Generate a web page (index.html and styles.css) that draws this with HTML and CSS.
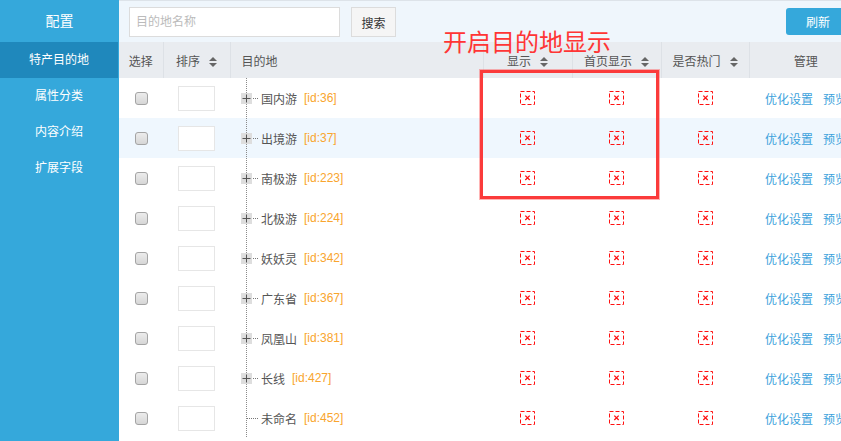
FILE: index.html
```html
<!DOCTYPE html>
<html lang="zh-CN">
<head>
<meta charset="utf-8">
<title>配置 - 特产目的地</title>
<link rel="stylesheet" href="styles.css">
</head>
<body>
<div class="app">
  <aside class="sidebar">
    <div class="side-title">配置</div>
    <nav class="menu">
      <a class="menu-item active">特产目的地</a>
      <a class="menu-item">属性分类</a>
      <a class="menu-item">内容介绍</a>
      <a class="menu-item">扩展字段</a>
    </nav>
  </aside>
  <main class="main">
    <div class="toolbar">
      <input class="search-input" type="text" placeholder="目的地名称">
      <button class="btn-search">搜索</button>
      <button class="btn-refresh">刷新</button>
    </div>
    <table class="grid">
      <colgroup>
        <col class="c-sel"><col class="c-ord"><col class="c-dest"><col class="c-show"><col class="c-home"><col class="c-hot"><col class="c-man">
      </colgroup>
      <thead>
        <tr>
          <th>选择</th>
          <th>排序<svg class="sort" width="8" height="10" viewBox="0 0 8 10"><path d="M0 4L4 0L8 4ZM0 6L4 10L8 6Z"/></svg></th>
          <th class="th-left">目的地</th>
          <th>显示<svg class="sort" width="8" height="10" viewBox="0 0 8 10"><path d="M0 4L4 0L8 4ZM0 6L4 10L8 6Z"/></svg></th>
          <th>首页显示<svg class="sort" width="8" height="10" viewBox="0 0 8 10"><path d="M0 4L4 0L8 4ZM0 6L4 10L8 6Z"/></svg></th>
          <th>是否热门<svg class="sort" width="8" height="10" viewBox="0 0 8 10"><path d="M0 4L4 0L8 4ZM0 6L4 10L8 6Z"/></svg></th>
          <th>管理</th>
        </tr>
      </thead>
      <tbody id="rows"></tbody>
    </table>
  </main>
  <div class="note">开启目的地显示</div>
  <div class="highlight"></div>
</div>
<script src="app.js"></script>
</body>
</html>
```

FILE: app.js
```js
var data = [
  ["国内游", 36, true], ["出境游", 37, true], ["南极游", 223, true],
  ["北极游", 224, true], ["妖妖灵", 342, true], ["广东省", 367, true],
  ["凤凰山", 381, true], ["长线", 427, true], ["未命名", 452, false]
];
var xicon = '<svg class="xicon" width="15" height="14" viewBox="0 0 15 14"><rect x="0.5" y="0.5" width="14" height="13" fill="none" stroke="#ff1010" stroke-dasharray="4 2"/><path d="M5.3 4.6L9.7 9M9.7 4.6L5.3 9" stroke="#ff1010" stroke-width="1.3"/></svg>';
var plus = '<span class="plus"><svg width="11" height="11" viewBox="0 0 11 11"><path d="M1.5 5.5h8M5.5 1.5v8" stroke="#555" stroke-width="1"/></svg></span><span class="hline"></span>';
var html = "";
data.forEach(function (d, i) {
  html += '<tr class="' + (i === 1 ? "hover" : "") + '">' +
    '<td class="center"><span class="check"></span></td>' +
    '<td class="center"><input class="order" type="text"></td>' +
    '<td class="dest"><div class="node">' +
      (d[2] ? plus : '<span class="hline long"></span>') +
      '<span class="name">' + d[0] + '</span><span class="id">[id:' + d[1] + ']</span></div></td>' +
    '<td class="center">' + xicon + '</td>' +
    '<td class="center">' + xicon + '</td>' +
    '<td class="center">' + xicon + '</td>' +
    '<td class="manage"><a>优化设置</a><a>预览</a></td>' +
    '</tr>';
});
document.getElementById("rows").innerHTML = html;
```

FILE: styles.css
```css
* { box-sizing: border-box; }
html, body { margin: 0; padding: 0; overflow: hidden; }
body {
  font-family: "Liberation Sans", "Noto Sans CJK SC", sans-serif;
  font-size: 12px;
  color: #555;
  background: #fff;
}
.app {
  position: relative;
  display: flex;
  width: 862px;
  height: 441px;
}
.sidebar {
  width: 119px;
  flex-shrink: 0;
  background: #35a8db;
  color: #fff;
}
.side-title {
  height: 42px;
  line-height: 42px;
  text-align: center;
  font-size: 14px;
}
.menu { display: flex; flex-direction: column; }
.menu-item {
  display: block;
  height: 36px;
  line-height: 36px;
  text-align: center;
  font-size: 12px;
  color: #fff;
  margin-right: 1px;
}
.menu-item.active { background: #1f88bc; }
.main {
  width: 743px;
  flex-shrink: 0;
}
.toolbar {
  height: 42px;
  display: flex;
  align-items: flex-start;
  padding: 6px 12px 0 10px;
  background: #eff6fc;
  border-top: 1px solid #dde3e9;
}
.search-input {
  width: 211px;
  height: 30px;
  border: 1px solid #dcdcdc;
  background: #fff;
  padding: 0 6px;
  font: inherit;
  color: #555;
  outline: none;
}
.search-input::placeholder { color: #bbb; }
.btn-search {
  margin-left: 11px;
  width: 45px;
  height: 30px;
  border: 1px solid #dcdcdc;
  background: #f5f5f5;
  font: inherit;
  color: #333;
  padding: 0;
}
.btn-refresh {
  margin-left: auto;
  margin-top: 1px;
  width: 64px;
  height: 27px;
  border: none;
  border-radius: 3px;
  background: #35a8db;
  color: #fff;
  font: inherit;
  padding: 0;
}
.grid {
  width: 743px;
  table-layout: fixed;
  border-collapse: collapse;
}
.c-sel { width: 44px; }
.c-ord { width: 67px; }
.c-dest { width: 253px; }
.c-show { width: 89px; }
.c-home { width: 89px; }
.c-hot { width: 88px; }
.c-man { width: 113px; }
.grid th {
  height: 36px;
  padding: 0;
  background: #e9ecf0;
  font-weight: normal;
  color: #555;
  text-align: center;
  border-left: 1px solid #dde1e6;
  white-space: nowrap;
}
.grid th:first-child { border-left: none; }
.grid th.th-left { text-align: left; padding-left: 11px; }
.sort {
  margin-left: 9px;
  vertical-align: -1px;
  fill: #666;
}
.grid td {
  height: 40px;
  padding: 0;
  vertical-align: middle;
  white-space: nowrap;
}
.grid tr.hover td { background-color: #eff7fe; }
.center { text-align: center; }
.check {
  display: inline-block;
  width: 13px;
  height: 13px;
  border: 1px solid #a4a4a4;
  border-radius: 3px;
  background: linear-gradient(#ececec, #d6d6d6);
  vertical-align: middle;
}
.order {
  display: inline-block;
  width: 37px;
  height: 25px;
  border: 1px solid #e6e6e6;
  background: #fff;
  vertical-align: middle;
  outline: none;
  padding: 0;
}
.grid td.dest {
  padding-left: 11px;
  background-image: linear-gradient(#8a8a8a 50%, transparent 50%);
  background-size: 1px 2px;
  background-repeat: repeat-y;
  background-position: 16px 0;
}
.node { display: flex; align-items: center; }
.plus {
  display: inline-flex;
  width: 11px;
  height: 11px;
  background: #dedede;
}
.plus svg { display: block; }
.hline {
  display: inline-block;
  width: 5px;
  height: 0;
  border-top: 1px dotted #777;
  margin-left: 1px;
  margin-right: 3px;
}
.hline.long { width: 11px; margin-left: 6px; margin-right: 3px; }
.name { color: #555; }
.id { color: #f9a52e; margin-left: 7px; }
.xicon { display: inline-block; vertical-align: middle; }
.manage { padding-left: 16px !important; }
.manage a { color: #3ca2dc; margin-right: 10px; }
.note {
  position: absolute;
  left: 443px;
  top: 29px;
  font-size: 24px;
  line-height: 24px;
  color: #ff3535;
  font-family: "Noto Sans CJK SC", sans-serif;
}
.highlight {
  position: absolute;
  left: 480px;
  top: 70px;
  width: 179px;
  height: 129px;
  border: 3px solid #fb3b3b;
  box-shadow: 0 0 0 1px rgba(255, 90, 90, 0.45);
}
```
